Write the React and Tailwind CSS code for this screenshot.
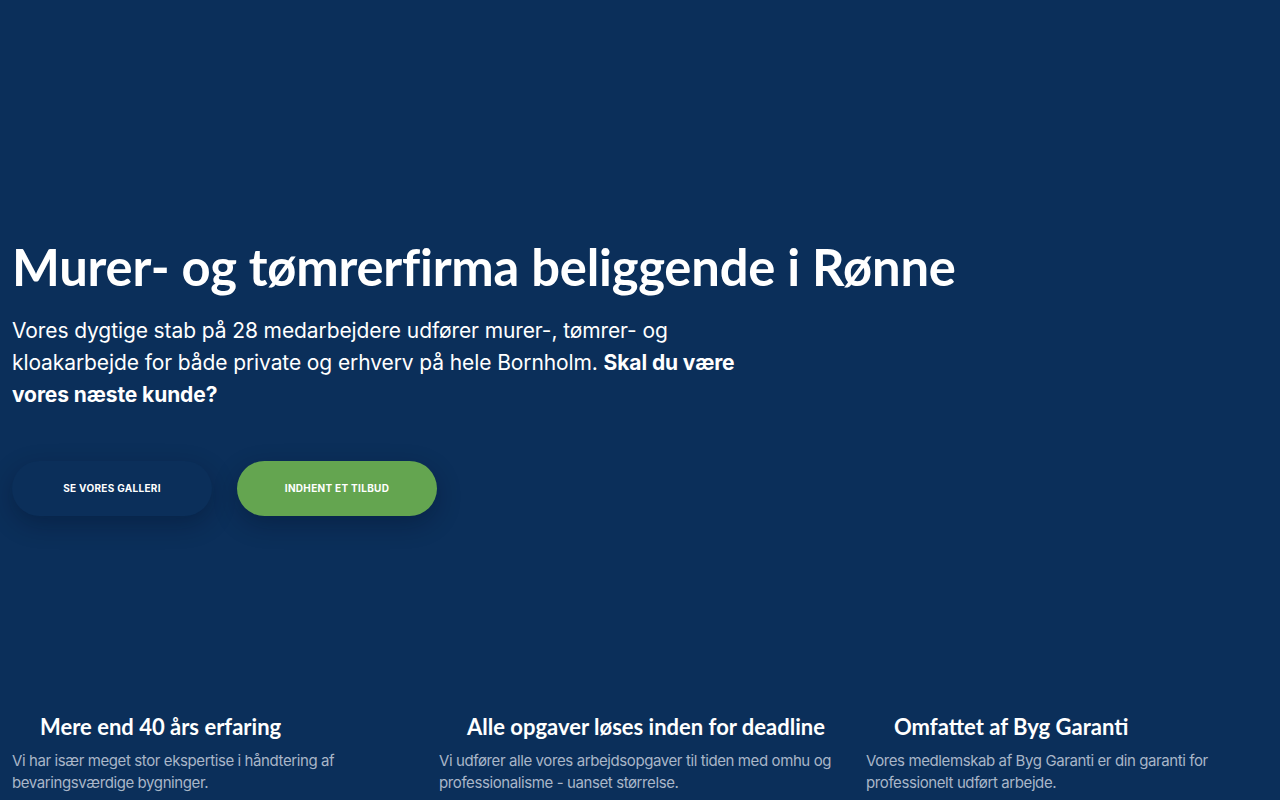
import React from 'react';

const features = [
  {
    title: 'Mere end 40 års erfaring',
    text: 'Vi har især meget stor ekspertise i håndtering af bevaringsværdige bygninger.',
  },
  {
    title: 'Alle opgaver løses inden for deadline',
    text: 'Vi udfører alle vores arbejdsopgaver til tiden med omhu og professionalisme - uanset størrelse.',
  },
  {
    title: 'Omfattet af Byg Garanti',
    text: 'Vores medlemskab af Byg Garanti er din garanti for professionelt udført arbejde.',
  },
];

export default function App() {
  return (
    <div className="min-h-screen h-[800px] overflow-hidden bg-[#0b2f5a] text-white" style={{ fontFamily: 'Inter, "Noto Sans", sans-serif' }}>
      {/* Hero */}
      <section className="px-3 pt-[239px]">
        <h1 className="text-[50.7px] leading-[1.1] font-bold tracking-[-0.2px]" style={{ fontFamily: 'Lato, "Open Sans", sans-serif' }}>
          Murer- og tømrerfirma beliggende i Rønne
        </h1>
        <p className="mt-[20px] max-w-[740px] text-[21px] leading-[32px] tracking-[-0.1px] text-white">
          Vores dygtige stab på 28 medarbejdere udfører murer-, tømrer- og kloakarbejde for både private og erhverv på hele Bornholm.{' '}
          <strong className="font-bold">Skal du være vores næste kunde?</strong>
        </p>

        <div className="mt-[50px] flex gap-[25px]">
          <button className="h-[55px] w-[200px] rounded-full bg-[#0b2f5a] text-[10px] font-bold uppercase tracking-[0.3px] shadow-[0_8px_24px_rgba(0,10,30,0.3)]">
            Se vores galleri
          </button>
          <button className="h-[55px] w-[200px] rounded-full bg-[#64a550] text-[10px] font-bold uppercase tracking-[0.3px] shadow-[0_8px_24px_rgba(0,10,30,0.3)]">
            Indhent et tilbud
          </button>
        </div>
      </section>

      {/* Features */}
      <section className="mt-[196px] grid grid-cols-3 gap-x-[25px] px-3">
        {features.map((f) => (
          <div key={f.title}>
            <h3 className="pl-7 text-[22px] leading-[30px] font-bold" style={{ fontFamily: 'Lato, "Open Sans", sans-serif' }}>
              {f.title}
            </h3>
            <p className="mt-[8px] text-[15px] leading-[22px] tracking-[-0.4px] text-[#a9b6c8]">{f.text}</p>
          </div>
        ))}
      </section>
    </div>
  );
}
